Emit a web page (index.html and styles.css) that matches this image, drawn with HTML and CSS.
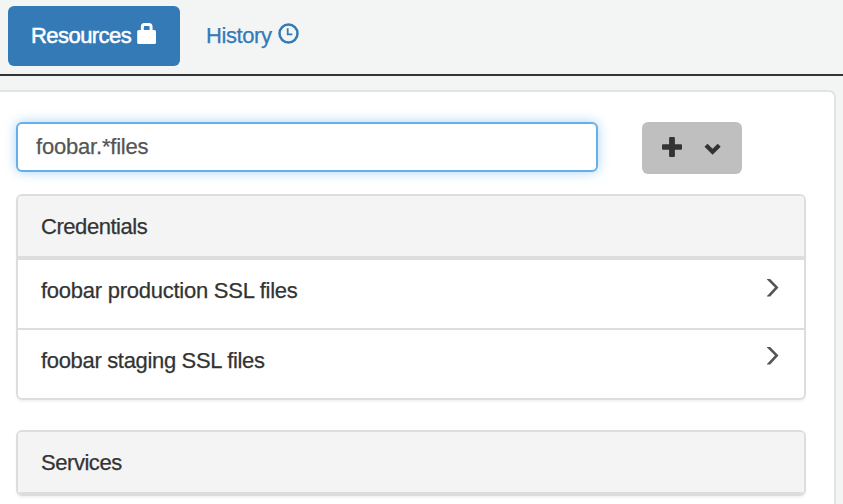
FILE: index.html
```
<!DOCTYPE html>
<html lang="en">
<head>
<meta charset="utf-8">
<title>Resources</title>
<link rel="stylesheet" href="styles.css">
</head>
<body>
<nav class="tabs">
  <a class="tab active"><span class="label">Resources</span><svg class="lock" width="20" height="22" viewBox="0 0 20 22"><path d="M5.3 8V4.2C5.3 2.6 6.1 1.5 7.5 1.5h4.4c1.4 0 2.2 1.1 2.2 2.7V8" fill="none" stroke="currentColor" stroke-width="3"/><rect x="0.2" y="7" width="18.8" height="14" rx="1.5" fill="currentColor"/></svg></a>
  <a class="tab"><span class="label">History</span><svg class="clock" width="22" height="22" viewBox="0 0 22 22" fill="none" stroke="currentColor"><circle cx="10.5" cy="10.5" r="9" stroke-width="2.5"/><path d="M9.7 5.3v6h4.6" stroke-width="1.8"/></svg></a>
</nav>
<main class="panel">
  <div class="toolbar">
    <input class="search" type="text" value="foobar.*files">
    <button class="add" type="button" aria-label="Add">
      <svg width="20" height="20" viewBox="0 0 20 20"><path d="M8.1 0h3.8q1 0 1 1v6.2H19q1 0 1 1v3.6q0 1-1 1h-6.1V19q0 1-1 1H8.1q-1 0-1-1v-6.2H1q-1 0-1-1V8.2q0-1 1-1h6.1V1q0-1 1-1z" fill="currentColor"/></svg>
      <svg class="down" width="18" height="12" viewBox="0 0 18 12"><path d="M2 2.2l6.6 6.6 6.6-6.6" fill="none" stroke="currentColor" stroke-width="4.2"/></svg>
    </button>
  </div>
  <section class="group">
    <h2 class="heading">Credentials</h2>
    <div class="row"><span>foobar production SSL files</span><svg class="chevron" width="14" height="20" viewBox="0 0 14 20"><path d="M1 1h3.2l8.3 8.6-8.3 8.9H1v-.6l7.9-8.3L1 1.500z" fill="currentColor"/></svg></div>
    <div class="row second"><span>foobar staging SSL files</span><svg class="chevron" width="14" height="20" viewBox="0 0 14 20"><path d="M1 1h3.2l8.3 8.6-8.3 8.9H1v-.6l7.9-8.3L1 1.500z" fill="currentColor"/></svg></div>
  </section>
  <section class="group">
    <h2 class="heading">Services</h2>
  </section>
</main>
</body>
</html>
```
FILE: styles.css
```
* { box-sizing: border-box; }
html { height: 100%; overflow: hidden; }
body {
  margin: 0;
  height: 504px;
  overflow: hidden;
  background: #f3f5f4;
  color: #333;
  font: 22px/30px "Liberation Sans", Arial, sans-serif;
  letter-spacing: -0.25px;
  -webkit-text-stroke: 0.25px currentColor;
}
.tabs {
  display: flex;
  gap: 4px;
  height: 76px;
  padding: 6px 8px 0;
  border-bottom: 2px solid #333;
}
.tab {
  display: flex;
  align-items: flex-start;
  height: 60px;
  padding: 15px 22px 0;
  border-radius: 6px;
  color: #337ab7;
}
.tab .label { letter-spacing: -0.4px; }
.active {
  width: 172px;
  padding-left: 23px;
  background: #337ab7;
  color: #fff;
}
.active .label {
  letter-spacing: -0.55px;
  -webkit-text-stroke: 0.5px #fff;
}
.lock { margin: 2px 0 0 6px; }
.clock { margin: 2px 0 0 6px; }
.panel {
  width: 836px;
  height: 430px;
  margin-top: 14px;
  padding: 30px 28px 0 16px;
  border: 2px solid #e2e3e2;
  border-width: 2px 2px 0 0;
  border-radius: 0 7px 0 0;
  background: #fff;
}
.toolbar {
  display: flex;
  gap: 44px;
  height: 72px;
}
.search {
  width: 582px;
  height: 50px;
  padding: 0 18px;
  border: 2px solid #66afe9;
  border-radius: 6px;
  outline: 0;
  background: #fff;
  box-shadow: 0 0 12px rgba(102, 175, 233, .55);
  color: #555;
  font: inherit;
  letter-spacing: -0.2px;
  -webkit-text-stroke: 0.25px #555;
}
.add {
  display: flex;
  width: 100px;
  height: 52px;
  padding: 15px 20px;
  border: 0;
  border-radius: 6px;
  background: #bfbfbf;
  color: #333;
}
.down { margin: 6px 0 0 22px; }
.group {
  width: 790px;
  margin-bottom: 30px;
  border: 2px solid #ddd;
  border-radius: 6px;
  box-shadow: 0 2px 2px rgba(0, 0, 0, .05);
  overflow: hidden;
}
.heading {
  height: 64px;
  margin: 0;
  padding: 16px 23px 0;
  border-bottom: 4px solid #ddd;
  background: #f4f4f4;
  font-size: 22px;
  font-weight: 400;
  letter-spacing: -0.45px;
}
.heading:last-child {
  height: 62px;
  border-bottom-width: 2px;
}
.row {
  display: flex;
  justify-content: space-between;
  height: 70px;
  padding: 16px 24px 0 23px;
  border-bottom: 2px solid #ddd;
}
.row:last-child {
  height: 68px;
  border-bottom: 0;
  letter-spacing: -0.33px;
}
.chevron { margin-top: 2px; color: #555; }
.second .chevron { margin-top: 0; }
```
